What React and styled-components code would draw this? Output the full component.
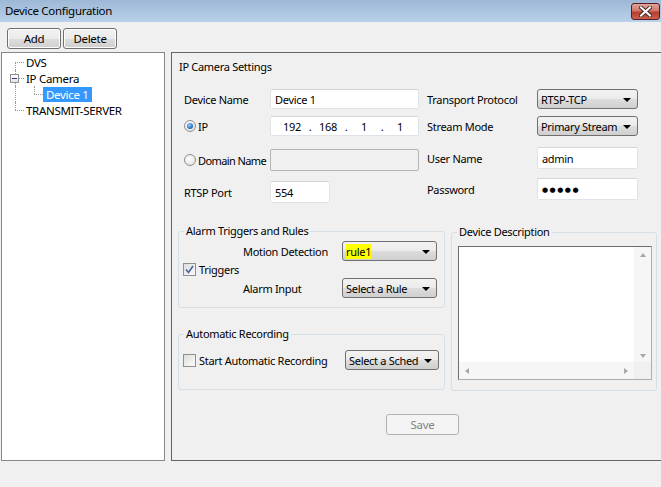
import React from 'react';
import styled, { createGlobalStyle } from 'styled-components';

const GlobalStyle = createGlobalStyle`
  html, body {
    margin: 0;
    padding: 0;
    background: #f0f0f0;
  }
  body {
    font-family: "Noto Sans", "DejaVu Sans", sans-serif;
    font-size: 11px;
    letter-spacing: -0.3px;
    color: #000;
  }
  #root {
    width: 661px;
    height: 487px;
    overflow: hidden;
  }
`;

const S_Window = styled.div`
  display: flex;
  flex-direction: column;
  width: 661px;
  height: 487px;
  background: #f0f0f0;`;

const S_TitleBar = styled.div`
  display: flex;
  justify-content: space-between;
  align-items: center;
  height: 22px;
  padding-left: 5px;
  background: linear-gradient(#9db8d6, #b9d1ea);
  box-sizing: border-box;`;

const S_Title = styled.span`
  font-size: 11.5px;
  line-height: 16px;`;

const S_Close = styled.div`
  display: flex;
  align-items: center;
  justify-content: center;
  width: 29px;
  height: 17px;
  margin-right: 1px;
  box-sizing: border-box;
  border: 1px solid #5b1c26;
  border-radius: 3px;
  background: linear-gradient(#e0a49a 0%, #d0776a 45%, #b73f2e 55%, #c8604c 100%);`;

const S_Toolbar = styled.div`
  display: flex;
  gap: 2px;
  height: 30px;
  padding: 6px 0 0 7px;
  box-sizing: border-box;`;

const S_Button = styled.button`
  width: ${p => p.$w || 54}px;
  height: 21px;
  padding: 0;
  font-family: inherit;
  font-size: 11.5px;
  letter-spacing: -0.3px;
  color: ${p => (p.disabled ? '#838383' : '#000')};
  border: 1px solid ${p => (p.disabled ? '#adb2b5' : '#707070')};
  border-radius: 3px;
  background: ${p => (p.disabled ? '#f4f4f4' : 'linear-gradient(#f2f2f2 0%, #ebebeb 50%, #dddddd 51%, #cfcfcf 100%)')};
  box-shadow: ${p => (p.disabled ? 'none' : 'inset 0 0 0 1px #fcfcfc')};`;

const S_Main = styled.div`
  display: flex;
  gap: 6px;
  height: 409px;
  padding-left: 1px;`;

const S_Tree = styled.div`
  width: 164px;
  box-sizing: border-box;
  border: 1px solid #828790;
  background: #fff;
  padding: 1px 0 0 4px;`;

const S_TreeRow = styled.div`
  display: flex;
  align-items: center;
  height: 16px;`;

const S_Guide = styled.span`
  position: relative;
  flex-shrink: 0;
  width: ${p => p.$w}px;
  height: 16px;
  &::before {
    content: '';
    display: ${p => (p.$v ? 'block' : 'none')};
    position: absolute;
    left: ${p => p.$x}px;
    top: ${p => (p.$v === 'down' ? 8 : 0)}px;
    bottom: ${p => (p.$v === 'up' ? 8 : 0)}px;
    border-left: 1px dotted #9a9a9a;
  }
  &::after {
    content: '';
    display: ${p => (p.$h ? 'block' : 'none')};
    position: absolute;
    left: ${p => p.$x}px;
    right: 0;
    top: 8px;
    border-top: 1px dotted #9a9a9a;
  }`;

const S_Expander = styled.span`
  position: absolute;
  z-index: 1;
  left: 4px;
  top: 4px;
  width: 9px;
  height: 9px;
  box-sizing: border-box;
  border: 1px solid #919191;
  background: linear-gradient(#ffffff, #e2e2e2);
  &::after {
    content: '';
    position: absolute;
    left: 1px;
    right: 1px;
    top: 3px;
    border-top: 1px solid #2c3e8c;
  }`;

const S_TreeLabel = styled.span`
  padding: 0 ${p => (p.$selected ? 3 : 2)}px;
  font-size: 11.5px;
  line-height: 15px;
  white-space: nowrap;
  color: ${p => (p.$selected ? '#fff' : '#000')};
  background: ${p => (p.$selected ? '#3399ff' : 'transparent')};`;

const S_Panel = styled.div`
  flex: 1;
  box-sizing: border-box;
  border: 1px solid #646464;
  border-right: none;
  padding: 6px 0 0 6px;`;

const S_PanelTitle = styled.div`
  margin-left: 1px;
  line-height: 16px;`;

const S_Upper = styled.div`
  display: flex;
  gap: 8px;
  margin-top: 14px;
  padding-left: 6px;`;

const S_Column = styled.div`
  display: flex;
  flex-direction: column;
  width: ${p => p.$w}px;`;

const S_Row = styled.div`
  display: flex;
  align-items: center;
  height: ${p => p.$h || 20}px;
  margin-top: ${p => p.$mt || 0}px;`;

const S_Label = styled.span`
  display: flex;
  align-items: center;
  gap: 2px;
  width: ${p => p.$w}px;
  flex-shrink: 0;
  white-space: nowrap;
  letter-spacing: ${p => (p.$tight ? '-0.6px' : 'inherit')};`;

const S_Input = styled.div`
  display: flex;
  align-items: center;
  width: ${p => p.$w}px;
  height: 100%;
  box-sizing: border-box;
  padding-left: 4px;
  border: 1px solid ${p => (p.$disabled ? '#b5b5b5' : '#e0e3e8')};
  border-top-color: ${p => (p.$disabled ? '#b5b5b5' : '#d3d6db')};
  border-radius: 2px;
  background: ${p => (p.$disabled ? '#f0f0f0' : '#fff')};
  white-space: nowrap;`;

const S_Octet = styled.span`
  width: ${p => p.$w}px;
  text-align: center;`;

const S_Dots = styled.span`
  font-size: 7px;
  letter-spacing: 1.5px;`;

const S_Radio = styled.span`
  position: relative;
  flex-shrink: 0;
  width: 12px;
  height: 12px;
  box-sizing: border-box;
  border-radius: 50%;
  border: 1px solid #8e8f8f;
  background: radial-gradient(circle at 40% 35%, #ffffff, #dcdcdc);
  &::after {
    content: '';
    display: ${p => (p.$on ? 'block' : 'none')};
    position: absolute;
    left: 2px;
    top: 2px;
    width: 6px;
    height: 6px;
    border-radius: 50%;
    background: radial-gradient(circle at 40% 35%, #9fd1ff, #1b5fb8 70%);
  }`;

const S_Select = styled.div`
  position: relative;
  display: flex;
  align-items: center;
  width: ${p => p.$w}px;
  height: 20px;
  box-sizing: border-box;
  padding: 0 16px 0 3px;
  overflow: hidden;
  border: 1px solid #707070;
  border-radius: 3px;
  background: linear-gradient(#f2f2f2 0%, #ebebeb 50%, #dddddd 51%, #cfcfcf 100%);
  white-space: nowrap;
  &::after {
    content: '';
    position: absolute;
    right: 6px;
    top: 8px;
    border-left: 4px solid transparent;
    border-right: 4px solid transparent;
    border-top: 4px solid #000;
  }`;

const S_Mark = styled.span`
  background: ${p => (p.$on ? '#ffff00' : 'transparent')};`;

const S_Lower = styled.div`
  display: flex;
  gap: 6px;
  margin-top: 21px;`;

const S_Group = styled.fieldset`
  margin: ${p => p.$mt || 0}px 0 0 0;
  padding: 0;
  width: ${p => p.$w}px;
  height: ${p => p.$h}px;
  box-sizing: border-box;
  min-width: 0;
  border: 1px solid #d5dfe5;
  border-radius: 3px;`;

const S_Legend = styled.legend`
  margin-left: 5px;
  padding: 0 2px;
  line-height: 14px;`;

const S_AlarmBody = styled.div`
  display: flex;
  align-items: center;
  padding: 3px 0 0 4px;`;

const S_Check = styled.span`
  display: flex;
  align-items: center;
  justify-content: center;
  flex-shrink: 0;
  width: 13px;
  height: 13px;
  box-sizing: border-box;
  border: 1px solid #8e8f8f;
  background: linear-gradient(135deg, #dedede, #fbfbfb);`;

const S_CheckLabel = styled.span`
  display: flex;
  align-items: center;
  gap: 3px;
  white-space: nowrap;
  width: ${p => p.$w || 'auto'};`;

const S_Rules = styled.div`
  display: flex;
  flex-direction: column;
  gap: 17px;`;

const S_RecordBody = styled.div`
  display: flex;
  align-items: center;
  justify-content: space-between;
  padding: 9px 5px 0 4px;`;

const S_ScrollBox = styled.div`
  display: grid;
  grid-template-columns: 1fr 17px;
  grid-template-rows: 1fr 17px;
  width: 194px;
  height: 134px;
  margin: 7px 0 0 6px;
  box-sizing: border-box;
  border: 1px solid #abadb3;
  border-top-color: #6d6d6d;
  border-left-color: #6d6d6d;
  background: #fff;`;

const S_Track = styled.div`
  display: flex;
  flex-direction: ${p => (p.$vertical ? 'column' : 'row')};
  justify-content: space-between;
  align-items: center;
  padding: ${p => (p.$vertical ? '6px 0 4px' : '0 6px')};
  background: #f6f6f6;`;

const S_Arrow = styled.span`
  width: 0;
  height: 0;
  border: 3px solid transparent;
  ${p => p.$dir === 'up' && 'border-bottom: 4px solid #a7a7a7; border-top-width: 0;'}
  ${p => p.$dir === 'down' && 'border-top: 4px solid #a7a7a7; border-bottom-width: 0;'}
  ${p => p.$dir === 'left' && 'border-right: 4px solid #a7a7a7; border-left-width: 0;'}
  ${p => p.$dir === 'right' && 'border-left: 4px solid #a7a7a7; border-right-width: 0;'}`;

const S_Corner = styled.div`
  background: #f0f0f0;`;

const S_SaveRow = styled.div`
  margin: 23px 0 0 208px;`;

const TreeItem = ({ guides, label, selected, expander }) => (
  <S_TreeRow>
    {guides.map((g, i) => (
      <S_Guide key={i} $w={g.w} $x={g.x} $v={g.v} $h={g.h}>
        {expander && i === 0 && <S_Expander />}
      </S_Guide>
    ))}
    <S_TreeLabel $selected={selected}>{label}</S_TreeLabel>
  </S_TreeRow>
);

const CheckMark = () => (
  <svg width="9" height="9" viewBox="0 0 9 9">
    <path d="M1 4.5 L3.5 7.5 L8 1" fill="none" stroke="#4b61a0" strokeWidth="1.6" />
  </svg>
);

const App = () => {
  return (
    <S_Window>
      <GlobalStyle />
      <S_TitleBar>
        <S_Title>Device Configuration</S_Title>
        <S_Close>
          <svg width="13" height="11" viewBox="0 0 13 11">
            <path d="M2 1.5 L11 9.5 M11 1.5 L2 9.5" stroke="#4a2a2a" strokeWidth="4" strokeLinecap="square" />
            <path d="M2 1.5 L11 9.5 M11 1.5 L2 9.5" stroke="#fff" strokeWidth="2" strokeLinecap="square" />
          </svg>
        </S_Close>
      </S_TitleBar>

      <S_Toolbar>
        <S_Button>Add</S_Button>
        <S_Button>Delete</S_Button>
      </S_Toolbar>

      <S_Main>
        <S_Tree>
          <TreeItem guides={[{ w: 18, x: 9, v: 'down', h: true }]} label="DVS" />
          <TreeItem guides={[{ w: 18, x: 9, v: 'full', h: true }]} label="IP Camera" expander />
          <TreeItem
            guides={[{ w: 18, x: 9, v: 'full' }, { w: 19, x: 10, v: 'up', h: true }]}
            label="Device 1"
            selected
          />
          <TreeItem guides={[{ w: 18, x: 9, v: 'up', h: true }]} label="TRANSMIT-SERVER" />
        </S_Tree>

        <S_Panel>
          <S_PanelTitle>IP Camera Settings</S_PanelTitle>

          <S_Upper>
            <S_Column $w={235}>
              <S_Row>
                <S_Label $w={86}>Device Name</S_Label>
                <S_Input $w={149}>Device 1</S_Input>
              </S_Row>
              <S_Row $mt={7}>
                <S_Label $w={86}><S_Radio $on />IP</S_Label>
                <S_Input $w={149}>
                  <S_Octet $w={3} />
                  <S_Octet $w={28}>192</S_Octet>
                  <S_Octet $w={8}>.</S_Octet>
                  <S_Octet $w={28}>168</S_Octet>
                  <S_Octet $w={8}>.</S_Octet>
                  <S_Octet $w={28}>1</S_Octet>
                  <S_Octet $w={8}>.</S_Octet>
                  <S_Octet $w={28}>1</S_Octet>
                </S_Input>
              </S_Row>
              <S_Row $mt={13} $h={22}>
                <S_Label $w={86} $tight><S_Radio />Domain Name</S_Label>
                <S_Input $w={149} $disabled />
              </S_Row>
              <S_Row $mt={10} $h={22}>
                <S_Label $w={86}>RTSP Port</S_Label>
                <S_Input $w={60}>554</S_Input>
              </S_Row>
            </S_Column>

            <S_Column $w={211}>
              <S_Row>
                <S_Label $w={110}>Transport Protocol</S_Label>
                <S_Select $w={101}>RTSP-TCP</S_Select>
              </S_Row>
              <S_Row $mt={7}>
                <S_Label $w={110}>Stream Mode</S_Label>
                <S_Select $w={101}>Primary Stream</S_Select>
              </S_Row>
              <S_Row $mt={11} $h={22}>
                <S_Label $w={110}>User Name</S_Label>
                <S_Input $w={101}>admin</S_Input>
              </S_Row>
              <S_Row $mt={9} $h={22}>
                <S_Label $w={110}>Password</S_Label>
                <S_Input $w={101}><S_Dots>●●●●●</S_Dots></S_Input>
              </S_Row>
            </S_Column>
          </S_Upper>

          <S_Lower>
            <S_Column $w={267}>
              <S_Group $w={267} $h={84}>
                <S_Legend>Alarm Triggers and Rules</S_Legend>
                <S_AlarmBody>
                  <S_CheckLabel $w="60px">
                    <S_Check><CheckMark /></S_Check>Triggers
                  </S_CheckLabel>
                  <S_Rules>
                    <S_Row>
                      <S_Label $w={99}>Motion Detection</S_Label>
                      <S_Select $w={95}><S_Mark $on>rule1</S_Mark></S_Select>
                    </S_Row>
                    <S_Row>
                      <S_Label $w={99}>Alarm Input</S_Label>
                      <S_Select $w={95}>Select a Rule</S_Select>
                    </S_Row>
                  </S_Rules>
                </S_AlarmBody>
              </S_Group>

              <S_Group $w={267} $h={63} $mt={19}>
                <S_Legend>Automatic Recording</S_Legend>
                <S_RecordBody>
                  <S_CheckLabel>
                    <S_Check />Start Automatic Recording
                  </S_CheckLabel>
                  <S_Select $w={94}>Select a Sched</S_Select>
                </S_RecordBody>
              </S_Group>
            </S_Column>

            <S_Group $w={206} $h={166} $mt={1}>
              <S_Legend>Device Description</S_Legend>
              <S_ScrollBox>
                <div />
                <S_Track $vertical>
                  <S_Arrow $dir="up" />
                  <S_Arrow $dir="down" />
                </S_Track>
                <S_Track>
                  <S_Arrow $dir="left" />
                  <S_Arrow $dir="right" />
                </S_Track>
                <S_Corner />
              </S_ScrollBox>
            </S_Group>
          </S_Lower>

          <S_SaveRow>
            <S_Button $w={73} disabled>Save</S_Button>
          </S_SaveRow>
        </S_Panel>
      </S_Main>
    </S_Window>
  );
};

export default App;
